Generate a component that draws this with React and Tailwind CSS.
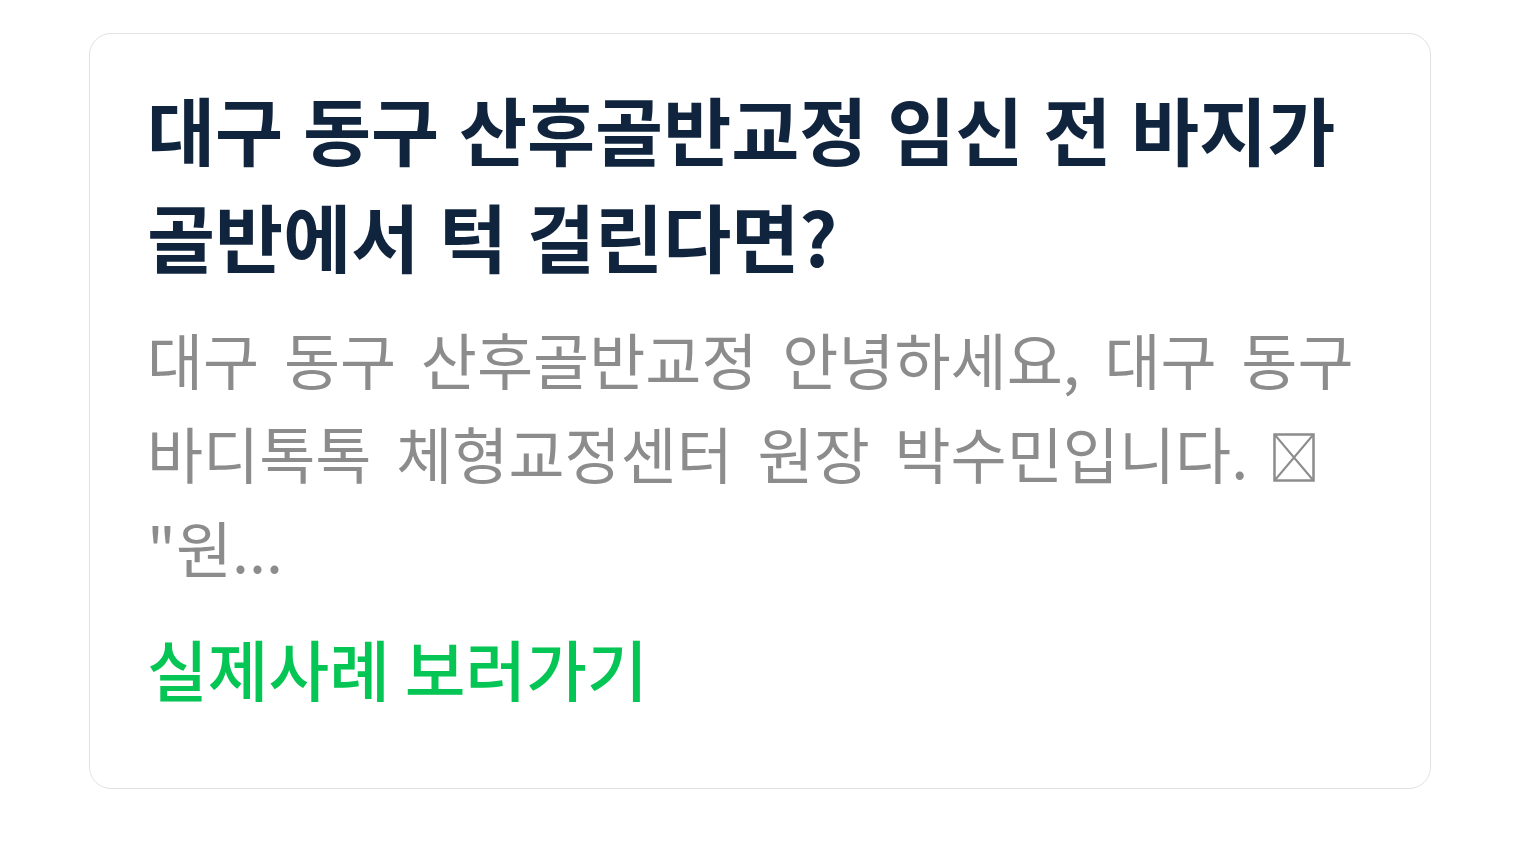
import React from 'react';

const font = { fontFamily: '"Noto Sans CJK KR", "Noto Sans", sans-serif' };

function MissingGlyph() {
  return (
    <svg
      width="42"
      height="49"
      viewBox="0 0 42 49"
      className="inline-block align-[-3px]"
      aria-hidden="true"
    >
      <rect x="1.5" y="1.5" width="39" height="46" fill="none" stroke="#8c8c8c" strokeWidth="2.5" />
      <line x1="2" y1="2" x2="40" y2="47" stroke="#8c8c8c" strokeWidth="2" />
      <line x1="40" y1="2" x2="2" y2="47" stroke="#8c8c8c" strokeWidth="2" />
    </svg>
  );
}

export default function App() {
  return (
    <div className="min-h-screen bg-white pt-[33px] px-[89px]" style={font}>
      <div className="w-[1342px] h-[756px] rounded-[22px] border border-[#e2e2e2] bg-white pl-[57px] pr-[50px] pt-[40px] break-keep">
        <h1 className="text-[74px] font-bold leading-[107px] text-[#10243e] [word-spacing:3px]">
          대구 동구 산후골반교정 임신 전 바지가 골반에서 턱 걸린다면?
        </h1>
        <p className="mt-[24px] text-[61px] leading-[94px] text-[#8c8c8c] [word-spacing:11px]">
          대구 동구 산후골반교정 안녕하세요, 대구 동구 바디톡톡 체형교정센터 원장 박수민입니다. <MissingGlyph /> "원...
        </p>
        <a href="#" className="mt-[28px] block text-[66px] font-medium leading-[90px] text-[#05c655]">
          실제사례 보러가기
        </a>
      </div>
    </div>
  );
}
